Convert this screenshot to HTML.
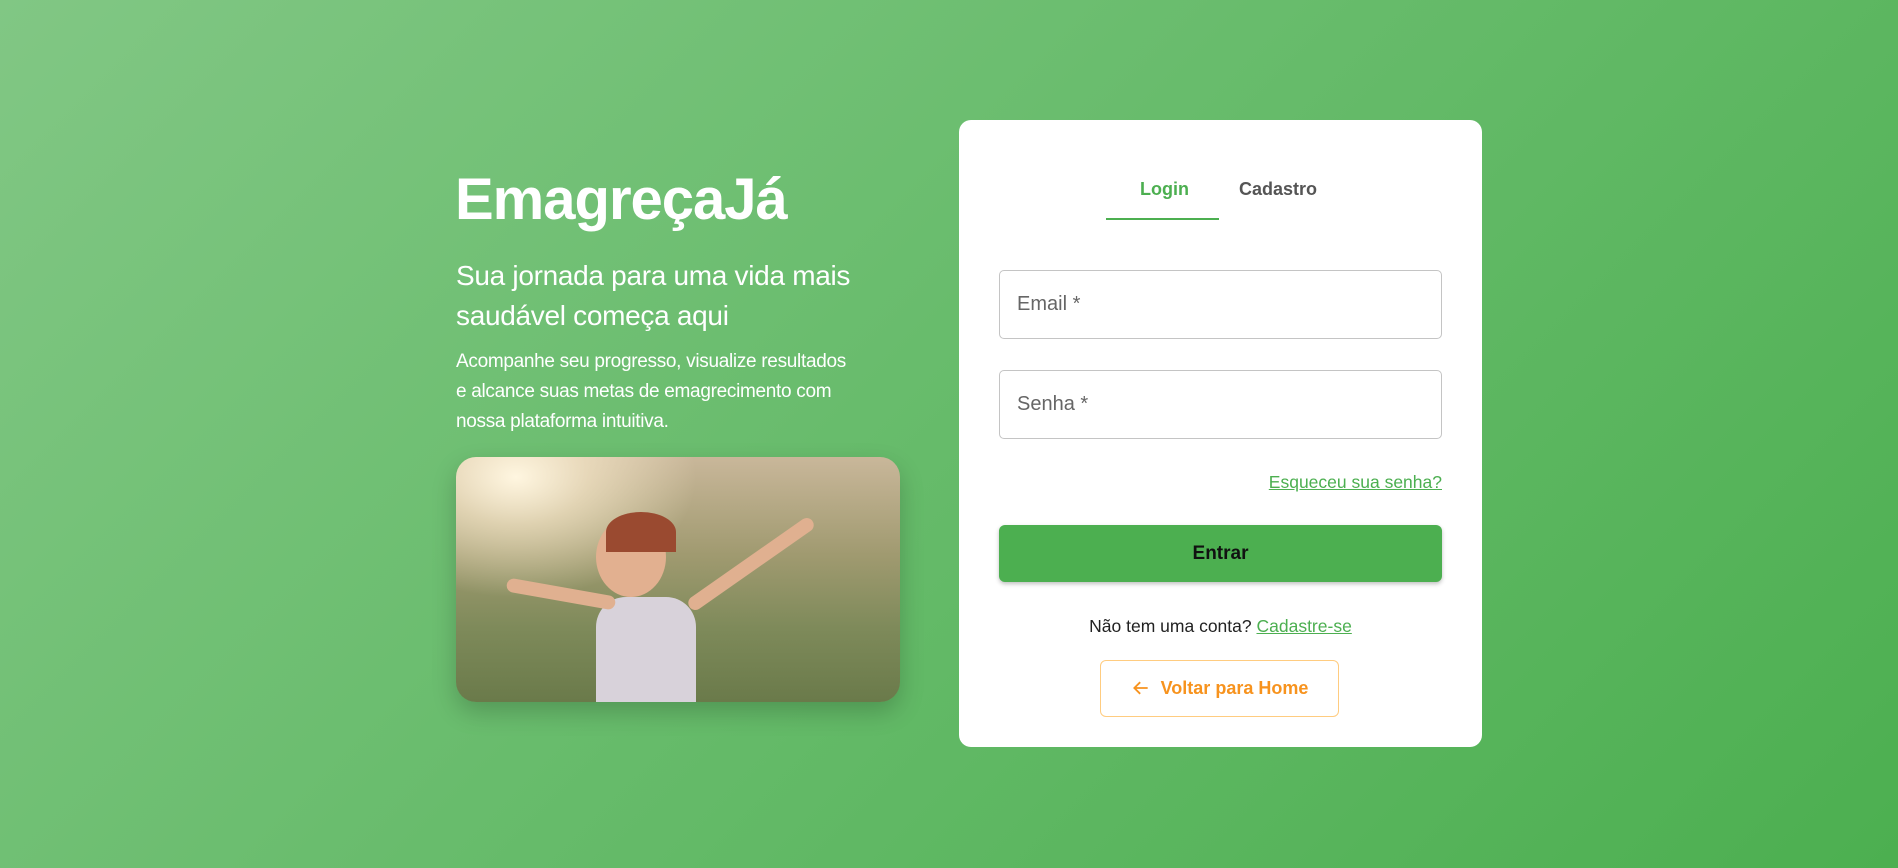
<!DOCTYPE html>
<html><head><meta charset="utf-8"><style>
*{margin:0;padding:0;box-sizing:border-box}
body{width:1898px;height:868px;overflow:hidden;font-family:"Liberation Sans",sans-serif;background:linear-gradient(135deg,#81c784 0%,#66bb6a 50%,#4caf50 100%);position:relative}
.a{position:absolute}
h1{position:absolute;left:455px;top:166px;font-size:58px;font-weight:bold;color:#fff;letter-spacing:-1px}
.sub{left:456px;top:256px;font-size:28px;line-height:40px;color:#fff;width:450px;letter-spacing:-0.3px}
.p{left:456px;top:347px;font-size:19px;line-height:30px;color:#fff;width:440px;letter-spacing:-0.3px}
.img{left:456px;top:457px;width:444px;height:245px;border-radius:20px;overflow:hidden;box-shadow:0 10px 25px rgba(0,0,0,.2);
background:radial-gradient(ellipse 180px 120px at 60px 20px,#fff6e0 0%,rgba(255,240,210,.6) 40%,transparent 100%),linear-gradient(180deg,#c9b79a 0%,#a09a70 40%,#7e8a5a 70%,#6a7a4a 100%)}
.card{left:959px;top:120px;width:523px;height:627px;background:#fff;border-radius:12px}
.tab{top:59px;font-size:18px;font-weight:bold}
.inp{left:40px;width:443px;height:69px;border:1px solid #c4c4c4;border-radius:5px;font-size:20px;color:#666;padding:22px 17px}
.btn{left:40px;top:405px;width:443px;height:57px;background:#4caf50;border-radius:6px;box-shadow:0 2px 4px rgba(0,0,0,.25);font-size:19px;font-weight:bold;color:#111;text-align:center;line-height:57px}
.lk{color:#4caf50;text-decoration:underline}
</style></head><body>
<h1>EmagreçaJá</h1>
<div class="a sub">Sua jornada para uma vida mais saudável começa aqui</div>
<div class="a p">Acompanhe seu progresso, visualize resultados<br>e alcance suas metas de emagrecimento com<br>nossa plataforma intuitiva.</div>
<div class="a img">
<div class="a" style="left:140px;top:60px;width:70px;height:80px;border-radius:50%;background:#e2b090"></div>
<div class="a" style="left:150px;top:55px;width:70px;height:40px;border-radius:50% 50% 0 0;background:#9a4a30"></div>
<div class="a" style="left:140px;top:140px;width:100px;height:110px;border-radius:30px 30px 0 0;background:#d8d2da"></div>
<div class="a" style="left:50px;top:130px;width:110px;height:14px;border-radius:7px;background:#e0b090;transform:rotate(10deg)"></div>
<div class="a" style="left:220px;top:100px;width:150px;height:14px;border-radius:7px;background:#e0b090;transform:rotate(-35deg)"></div>
</div>
<div class="a card">
<div class="a tab" style="left:181px;color:#4caf50">Login</div>
<div class="a tab" style="left:280px;color:#555">Cadastro</div>
<div class="a" style="left:147px;top:98px;width:113px;height:2px;background:#4caf50"></div>
<div class="a inp" style="top:150px">Email *</div>
<div class="a inp" style="top:250px">Senha *</div>
<div class="a lk" style="right:40px;top:352px;font-size:17.5px">Esqueceu sua senha?</div>
<div class="a btn">Entrar</div>
<div class="a" style="left:0;width:523px;top:496px;text-align:center;font-size:17.5px;color:#222">Não tem uma conta? <span class="lk">Cadastre-se</span></div>
<div class="a" style="left:141px;top:540px;width:239px;height:57px;border:1px solid #ffcc80;border-radius:6px;color:#f7931e;font-size:18px;font-weight:bold;line-height:55px;text-align:center">
<svg width="20" height="20" viewBox="0 0 24 24" style="vertical-align:-4px;margin-right:10px"><path d="M20 12H5M11 5l-7 7 7 7" fill="none" stroke="#f7931e" stroke-width="2.2"/></svg>Voltar para Home</div>
</div>
</body></html>
